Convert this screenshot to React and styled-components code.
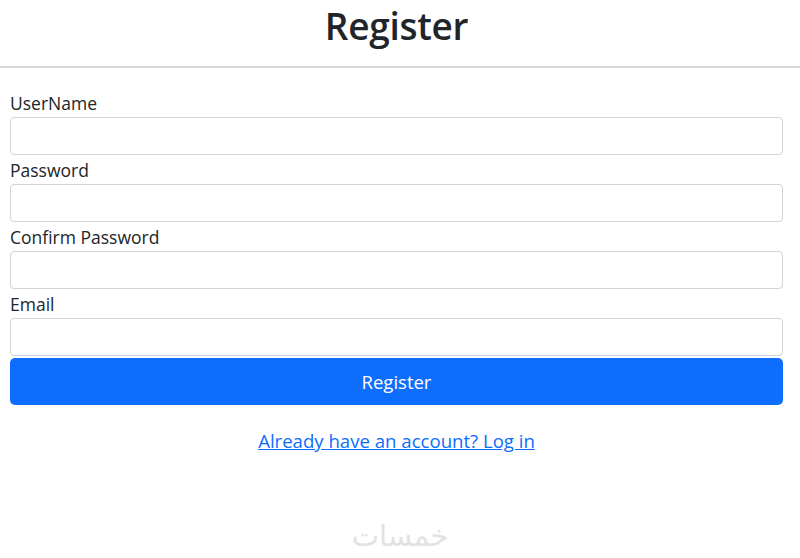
import React, { useState } from 'react';
import styled, { createGlobalStyle } from 'styled-components';

const GlobalStyle = createGlobalStyle`
  html, body {
    margin: 0;
    padding: 0;
    background: #fff;
  }
  body {
    font-family: "Open Sans", "Noto Sans", "Liberation Sans", sans-serif;
    color: #212529;
  }
  * { box-sizing: border-box; }
`;

const Page = styled.div`
  width: 800px;
  height: 558px;
  display: flex;
  flex-direction: column;
  overflow: hidden;
`;

const Title = styled.h1`
  margin: 0;
  padding: 2px 17px 0 10px;
  text-align: center;
  font-size: 37px;
  font-weight: 600;
  line-height: 48px;
  color: #212529;
  letter-spacing: -0.3px;
`;

const Rule = styled.hr`
  margin: 16px 0 0;
  border: none;
  border-top: 2px solid #d6d6d6;
`;

const Form = styled.form`
  display: flex;
  flex-direction: column;
  padding: 0 17px 0 10px;
  margin-top: 23px;
`;

const Label = styled.label`
  display: block;
  font-size: 17.5px;
  line-height: 24px;
  margin: ${p => (p.$first ? '0' : '3px')} 0 2px;
  color: #212529;
`;

const Input = styled.input`
  display: block;
  width: 100%;
  height: 38px;
  padding: 6px 12px;
  font-size: 16px;
  border: 1px solid #ced4da;
  border-radius: 4px;
  outline: none;
  background: #fff;
`;

const Button = styled.button`
  display: block;
  width: 100%;
  height: 47px;
  margin-top: 2px;
  border: none;
  border-radius: 5px;
  background: #0d6efd;
  color: #fff;
  font-family: inherit;
  font-size: 18.5px;
  cursor: pointer;
`;

const LinkRow = styled.div`
  text-align: center;
  padding: 0 17px 0 10px;
  margin-top: 23px;
`;

const Link = styled.a`
  color: #0d6efd;
  font-size: 18.6px;
  text-decoration: underline;
  cursor: pointer;
`;

const Watermark = styled.div`
  margin-top: 66px;
  text-align: center;
  font-family: "DejaVu Sans", sans-serif;
  font-size: 29px;
  color: #e2e2e2;
  direction: rtl;
`;

const fields = [
  { name: 'username', label: 'UserName', type: 'text' },
  { name: 'password', label: 'Password', type: 'password' },
  { name: 'confirm', label: 'Confirm Password', type: 'password' },
  { name: 'email', label: 'Email', type: 'email' },
];

export default function App() {
  const [values, setValues] = useState({});

  const onChange = e => {
    setValues({ ...values, [e.target.name]: e.target.value });
  };

  return (
    <Page>
      <GlobalStyle />
      <Title>Register</Title>
      <Rule />
      <Form onSubmit={e => e.preventDefault()}>
        {fields.map((f, idx) => (
          <div key={f.name}>
            <Label $first={idx === 0} htmlFor={f.name}>{f.label}</Label>
            <Input
              id={f.name}
              name={f.name}
              type={f.type}
              value={values[f.name] || ''}
              onChange={onChange}
            />
          </div>
        ))}
        <Button type="submit">Register</Button>
      </Form>
      <LinkRow>
        <Link>Already have an account? Log in</Link>
      </LinkRow>
      <Watermark>خمسات</Watermark>
    </Page>
  );
}
